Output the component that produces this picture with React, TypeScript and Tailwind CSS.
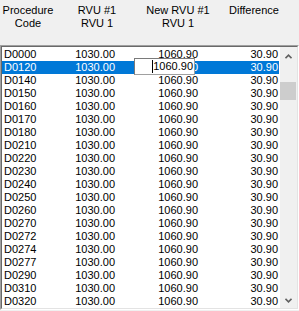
const codes = [
  "D0000", "D0120", "D0140", "D0150", "D0160", "D0170", "D0180", "D0210", "D0220", "D0230",
  "D0240", "D0250", "D0260", "D0270", "D0272", "D0274", "D0277", "D0290", "D0310", "D0320",
];

function Chevron({ down }: { down?: boolean }) {
  return (
    <svg width="7" height="5" viewBox="0 0 7 5" className={down ? "rotate-180" : ""}>
      <path d="M0.5 4.2 L3.5 1.2 L6.5 4.2" fill="none" stroke="#606060" strokeWidth="1.6" />
    </svg>
  );
}

export default function App() {
  return (
    <div className="relative w-[299px] h-[311px] bg-[#f0f0f0] font-['Liberation_Sans',Arial,sans-serif] text-[11px] leading-[13px] text-black overflow-hidden">
      <div className="flex h-[45px] pt-[4px] text-center">
        <div className="w-[56px]">
          <div>Procedure</div>
          <div>Code</div>
        </div>
        <div className="w-[82px]">
          <div>RVU #1</div>
          <div>RVU 1</div>
        </div>
        <div className="w-[80px]">
          <div>New RVU #1</div>
          <div>RVU 1</div>
        </div>
        <div className="w-[72px]">
          <div>Difference</div>
        </div>
      </div>

      <div className="h-[265px] border border-t-[#a0a0a0] border-l-[#a0a0a0] border-r-white border-b-white">
        <div className="h-full flex bg-white border border-t-[#696969] border-l-[#696969] border-r-[#e3e3e3] border-b-[#e3e3e3]">
          <div className="w-[277px] pt-[1px]">
            {codes.map((code, i) => {
              const selected = i === 1;
              return (
                <div
                  key={code}
                  className={`flex h-[13px] ${selected ? "bg-[#0078d7] text-white" : ""}`}
                >
                  <div className="w-[58px] pl-[2px]">{code}</div>
                  <div className="w-[55px] text-right">1030.00</div>
                  <div className="w-[83px] text-right">1060.90</div>
                  <div className="w-[81px] text-right pr-[1px]">30.90</div>
                </div>
              );
            })}
          </div>
          <div className="w-[1px]" />
          <div className="w-[17px] bg-[#f0f0f0] flex flex-col">
            <div className="h-[17px] flex justify-center pt-[7px]">
              <Chevron />
            </div>
            <div className="mt-[18px] h-[18px] w-[16px] bg-[#cdcdcd]" />
            <div className="flex-1" />
            <div className="h-[17px] flex justify-center pt-[7px]">
              <Chevron down />
            </div>
          </div>
        </div>
      </div>

      <div className="absolute left-[134px] top-[58px] w-[61px] h-[17px] bg-white border border-t-[#7a7a7a] border-l-[#7a7a7a] border-r-[#a0a0a0] border-b-[#a0a0a0] flex items-center justify-end pr-[1px]">
        <span className="w-px h-[13px] bg-black" />
        <span>1060.90</span>
      </div>
    </div>
  );
}
